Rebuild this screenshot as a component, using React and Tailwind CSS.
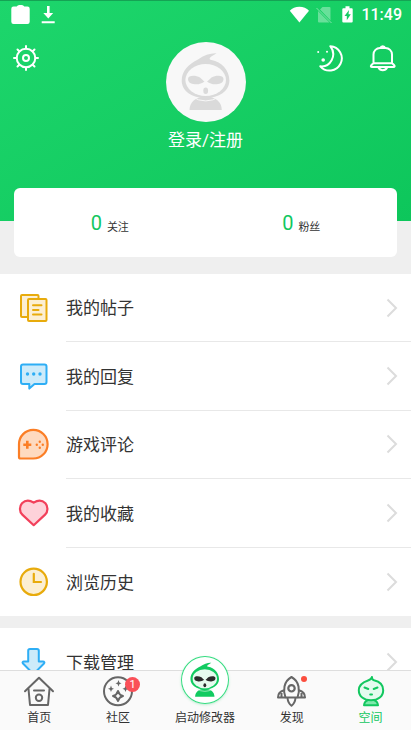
import { clsx } from "clsx"

const MENU = [
  { label: "我的帖子", icon: PostsIcon },
  { label: "我的回复", icon: ReplyIcon },
  { label: "游戏评论", icon: GameIcon },
  { label: "我的收藏", icon: HeartIcon },
  { label: "浏览历史", icon: ClockIcon },
]

const STATS = [
  { label: "关注", count: 0 },
  { label: "粉丝", count: 0 },
]

/* ==================== Menu icons ==================== */
function PostsIcon() {
  return (
    <svg viewBox="0 0 36 36" className="size-9" fill="#fcefd3" stroke="#e8ab0c" strokeWidth="2" strokeLinejoin="round" strokeLinecap="round">
      <rect x="5" y="5" width="17.500" height="22" rx="1" />
      <rect x="12" y="9" width="18.500" height="22" rx="1" />
      <path d="M17 15.300h8.500M17 20h5.500M17 24.500h8.500" />
    </svg>
  )
}

function ReplyIcon() {
  return (
    <svg viewBox="0 0 36 36" className="size-9" fill="#cdebfa" stroke="#2eaef5" strokeWidth="2" strokeLinejoin="round">
      <path d="M7 5.500h21.500a2 2 0 0 1 2 2V23a2 2 0 0 1-2 2H18.500l-5.200 4.600V25H7a2 2 0 0 1-2-2V7.500a2 2 0 0 1 2-2z" />
      <g fill="#2eaef5" stroke="none">
        <circle cx="11.500" cy="15" r="1.700" />
        <circle cx="17.700" cy="15" r="1.700" />
        <circle cx="24" cy="15" r="1.700" />
      </g>
    </svg>
  )
}

function GameIcon() {
  return (
    <svg viewBox="0 0 36 36" className="size-9">
      <path
        d="M4.500 31.500A1.500 1.500 0 0 1 3 30V17.300A14.300 14.300 0 1 1 17.300 31.500z"
        fill="#fedac0"
        stroke="#fb7e26"
        strokeWidth="2.200"
      />
      <path d="M11.300 13.800v8M7.300 17.800h8" stroke="#fb7e26" strokeWidth="2.600" />
      <g fill="#fb7e26">
        <circle cx="23.800" cy="14.800" r="1.200" />
        <circle cx="23.800" cy="20.800" r="1.200" />
        <circle cx="20.800" cy="17.800" r="1.200" />
        <circle cx="26.800" cy="17.800" r="1.200" />
      </g>
    </svg>
  )
}

function HeartIcon() {
  return (
    <svg viewBox="0 0 36 36" className="size-9" fill="#fed2da" stroke="#f2405b" strokeWidth="2.200" strokeLinejoin="round">
      <path d="M17.700 30.200L6.300 19.600C3.300 16.800 3.200 11.500 6 8.300c3-3 7.500-3.400 11.700-.6 4.200-2.800 8.700-2.400 11.700.6 2.800 3.200 2.700 8.500-.3 11.300z" />
    </svg>
  )
}

function ClockIcon() {
  return (
    <svg viewBox="0 0 36 36" className="size-9" fill="#fcefd3" stroke="#e8ab0c" strokeWidth="2.200" strokeLinecap="round">
      <circle cx="17.700" cy="17.800" r="13.200" />
      <path d="M17.800 9.800v8.200h7.200" fill="none" />
    </svg>
  )
}

function DownloadIcon() {
  return (
    <svg viewBox="0 0 36 36" className="size-9" fill="#cdebfa" stroke="#2eaef5" strokeWidth="2" strokeLinejoin="round">
      <path d="M14 5h7a1.800 1.800 0 0 1 1.800 1.800V17.500h4.200c1.300 0 1.800 1 1 2L18.600 29a1.600 1.600 0 0 1-2.200 0L7 19.500c-.9-1-.3-2 1-2h4.200V6.800A1.800 1.800 0 0 1 14 5z" />
    </svg>
  )
}

function Chevron() {
  return (
    <svg viewBox="0 0 12 20" className="w-3 h-5" fill="none" stroke="#dcdcdc" strokeWidth="2">
      <path d="M1.500 1.500L10 10l-8.500 8.500" />
    </svg>
  )
}

/* ==================== Mascot ==================== */
function Mascot({ className, color, face, eyes }) {
  return (
    <svg viewBox="0 0 80 80" className={className}>
      <path
        d="M50.500 11.200C45 10.800 38 13 32 17.500 23 22 15.700 28.500 15.700 38.500 15.700 49 26 56 39.500 56S63.400 49 63.400 38.500C63.400 28 55.500 20 45.500 18c-1.500-.3-2.500-1-1.500-2.200C45.500 14 48 13 50.500 11.200z"
        fill={color}
      />
      <ellipse cx="39.700" cy="38" rx="20.300" ry="16" fill={face} />
      <path d="M23.500 68c0-8 6.500-13.600 16.200-13.600S55.800 60 55.800 68z" fill={color} />
      <path d="M26 54.600a24 24 0 0 0 27.500 0" fill="none" stroke={face} strokeWidth="1" />
      <g fill={eyes}>
        <path d="M22 37c0-4 7.500-4 12-1.500 2 1.500 3 3.300 4.500 4-2.500 2-5.500 3-9.500 2.800C24.500 42 22 40 22 37z" />
        <path d="M57.500 37c0-4-7.500-4-12-1.500-2 1.500-3 3.300-4.500 4 2.500 2 5.500 3 9.500 2.800 4.500-.3 7-2.300 7-5.300z" />
        <ellipse cx="39.700" cy="48.800" rx="2.400" ry="3.200" />
      </g>
    </svg>
  )
}

/* ==================== Tab icons ==================== */
function HomeIcon() {
  return (
    <svg viewBox="0 0 32 32" className="size-8" fill="none" stroke="#666" strokeWidth="2" strokeLinejoin="round" strokeLinecap="round">
      <path d="M2 16.200L16 2.800l14 13.400" />
      <path d="M5.500 14l1.500 16h18l1.500-16M11 15.500h10" />
      <circle cx="16" cy="22.800" r="3.200" />
    </svg>
  )
}

function CommunityIcon() {
  return (
    <svg viewBox="0 0 32 32" className="size-8" fill="none" stroke="#666" strokeWidth="2">
      <circle cx="16" cy="16.300" r="14" />
      <path d="M16 16c.8 3 2 4.200 5 5-3 .8-4.200 2-5 5-.8-3-2-4.200-5-5 3-.8 4.200-2 5-5z" strokeLinejoin="round" />
      <g fill="#666" stroke="none">
        <path d="M16.500 5l.9 2.400 2.100.9-2.100.9-.9 2.400-.9-2.400-2.100-.9 2.100-.9z" />
        <path d="M9 10.500l.9 2.400 2.100.9-2.100.9-.9 2.400-.9-2.400-2.100-.9 2.100-.9z" />
        <path d="M23.500 10.500l.9 2.400 2.100.9-2.100.9-.9 2.400-.9-2.400-2.100-.9 2.100-.9z" />
      </g>
    </svg>
  )
}

function RocketIcon() {
  return (
    <svg viewBox="0 0 32 32" className="size-8" fill="none" stroke="#666" strokeWidth="2" strokeLinejoin="round">
      <path d="M9.500 22.500C7 16 7.300 6.500 15.500 2c8.200 4.500 8.500 14 6 20.500z" />
      <circle cx="15.500" cy="13.300" r="3.200" strokeWidth="2.200" />
      <path d="M8 15.300c-4 1-6 3-6 7.200h7.500M23 15.300c4 1 6 3 6 7.200h-7.500M5.500 22v-4M25.500 22v-4" />
      <path d="M11.500 23c.3 3.500 1.800 6 4 7.800 2.200-1.800 3.700-4.300 4-7.800" />
    </svg>
  )
}

function SpaceIcon() {
  return (
    <svg viewBox="0 0 32 32" className="size-8" fill="#e4fbef" stroke="#12c75f" strokeWidth="2" strokeLinejoin="round" strokeLinecap="round">
      <path d="M9 30.300c.3-2.500 1.500-4.500 4-5.300h6c2.500.8 3.700 2.800 4 5.300z" fill="#7fe8ac" />
      <path d="M17 2c-.3 1.600.2 2.600 2 3.300C24.500 6.500 28.200 10 28.200 15.300c0 6-5 10-12.200 10S3.800 21.300 3.800 15.300C3.800 9.500 8.500 7 13 5.500 15 4.800 16.500 3.800 17 2z" />
      <path d="M9.500 12.500l3.800 1.500M22.500 12.500L18.700 14M15.200 19.500h1.800" />
    </svg>
  )
}

function Tab({ label, active, children }) {
  return (
    <a
      href="#"
      className={clsx(
        "relative flex flex-col items-center pt-1 text-xs leading-[22px]",
        active ? "text-[#12c75f]" : "text-[#333]"
      )}
    >
      <span className="relative size-8">{children}</span>
      <span className="whitespace-nowrap">{label}</span>
    </a>
  )
}

function MenuRow({ label, icon: Icon, last }) {
  return (
    <a href="#" className="flex items-center gap-[14px] pl-4">
      <Icon />
      <span
        className={clsx(
          "flex flex-1 self-stretch items-center justify-between pr-[13px]",
          !last && "border-b border-[#e8e8e8]"
        )}
      >
        <span className="pt-[3px]">{label}</span>
        <Chevron />
      </span>
    </a>
  )
}

function StatusBar() {
  return (
    <div className="flex items-center justify-between h-7 pl-[10px] pr-[9px] border-t border-[#15a354]">
      <div className="flex items-center gap-2">
        <svg viewBox="0 0 20 20" className="size-5" fill="#fff">
          <path d="M3.500 1.500h3.200C7.500.4 9 0 10.500 0s3 .4 3.800 1.500h3.200A2.200 2.200 0 0 1 19.700 3.700v13a2.200 2.200 0 0 1-2.200 2.200h-14a2.200 2.200 0 0 1-2.200-2.200v-13A2.200 2.200 0 0 1 3.500 1.500z" />
        </svg>
        <svg viewBox="0 0 20 20" className="size-5" fill="#fff">
          <path d="M9 1h2.600v7h3.600L10.300 13.500 5.300 8H9zM3.700 16.300h13v1.900h-13z" />
        </svg>
      </div>
      <div className="flex items-center gap-1">
        <svg viewBox="0 0 20 20" className="size-5" fill="#fff">
          <path d="M10.400 17.500L.8 5.700C3.200 3.200 6.500 1.700 10.400 1.700s7.200 1.500 9.600 4z" />
        </svg>
        <svg viewBox="0 0 20 20" className="size-5">
          <path d="M9.500 2H16.500a1 1 0 0 1 1 1v12.500L7 4.500zM5 6l11.500 11.500H6a1 1 0 0 1-1-1z" fill="#fff" opacity=".35" />
          <path d="M3.500 3l15 15" stroke="#fff" opacity=".45" />
        </svg>
        <svg viewBox="0 0 20 20" className="size-5">
          <path d="M8.500 1.300h4v1.900h2.200a1 1 0 0 1 1 1V16.500a1 1 0 0 1-1 1H6.300a1 1 0 0 1-1-1V4.200a1 1 0 0 1 1-1H8.500z" fill="#fff" />
          <path d="M12 5L7.500 11h2.300v4.200l4-6h-2.300z" fill="#14cb63" />
        </svg>
        <span className="font-[Roboto,sans-serif] font-medium text-base">11:49</span>
      </div>
    </div>
  )
}

function Header() {
  return (
    <header className="h-[221px] text-white bg-linear-to-br from-[#1dd66c] to-[#0dc65b]">
      <StatusBar />
      <div className="grid grid-cols-[1fr_auto_1fr] items-start pt-[14px] px-3">
        <button aria-label="设置" className="justify-self-start pt-[2px]">
          <svg viewBox="0 0 28 28" className="size-7" fill="none" stroke="#fff" strokeWidth="2" strokeLinecap="round">
            <circle cx="14" cy="14" r="9.300" />
            <circle cx="14" cy="14" r="3" />
            <path d="M14 4.500V2M14 26v-2.500M4.500 14H2M26 14h-2.500M7.300 7.300L5.500 5.500M22.500 22.500l-1.800-1.800M7.300 20.700l-1.800 1.800M22.500 5.500l-1.800 1.800" />
          </svg>
        </button>
        <button className="flex flex-col items-center gap-[6px] text-[17px] leading-6">
          <span className="size-20 rounded-full bg-[#f8f8f8]">
            <Mascot className="size-20" color="#dadada" face="#f8f8f8" eyes="#dadada" />
          </span>
          登录/注册
        </button>
        <div className="flex justify-self-end gap-6 pt-[2px] pr-[2px]">
          <button aria-label="夜间模式">
            <svg viewBox="0 0 28 28" className="size-7" fill="none" stroke="#fff" strokeWidth="2" strokeLinejoin="round">
              <path d="M13.300 2.200A12.200 12.200 0 1 1 3.300 22.300C13 23.500 20.500 11.500 13.300 2.200z" />
              <g fill="#fff" stroke="none">
                <circle cx="1.200" cy="8" r="1" />
                <circle cx="10" cy="7.800" r="1" />
                <circle cx="6.200" cy="16" r="1.800" />
              </g>
            </svg>
          </button>
          <button aria-label="消息">
            <svg viewBox="0 0 28 28" className="size-7" fill="none" stroke="#fff" strokeWidth="2" strokeLinejoin="round">
              <path d="M4.500 19V10.500a6.500 6.500 0 0 1 6.500-6.500h5.500a6.500 6.500 0 0 1 6.500 6.500V19l2.200 2.200c.8.900.5 1.900-.7 1.900H3c-1.200 0-1.500-1-.7-1.900zM4.500 19.300h18.500" />
              <path d="M11.500 4a2.300 2.300 0 0 1 4.500 0M9.500 23.500c.8 1.700 2.300 2.700 4.300 2.700s3.500-1 4.300-2.700" />
            </svg>
          </button>
        </div>
      </div>
    </header>
  )
}

export default function App() {
  return (
    <div className="flex flex-col h-dvh bg-[#efefef] font-['Roboto','Noto_Sans_CJK_SC',sans-serif] text-[#333]">
      <main className="flex-1 min-h-0 overflow-y-auto [scrollbar-width:none]">
        <Header />

        {/* ==================== Stats card ==================== */}
        <section className="relative grid grid-cols-2 h-[69px] -mt-[33px] mx-[14px] mb-[17px] bg-white rounded-md">
          {STATS.map((stat) => (
            <a key={stat.label} href="#" className="flex items-center justify-center gap-[5px]">
              <span className="text-xl text-[#12c75f]">{stat.count}</span>
              <span className="mt-3 text-[11px]">{stat.label}</span>
            </a>
          ))}
        </section>

        {/* ==================== Menu ==================== */}
        <section className="grid grid-rows-5 h-[342px] mb-3 bg-white text-[17px]">
          {MENU.map((item, i) => (
            <MenuRow key={item.label} {...item} last={i === MENU.length - 1} />
          ))}
        </section>
        <section className="grid h-[68px] bg-white text-[17px]">
          <MenuRow label="下载管理" icon={DownloadIcon} last />
        </section>
      </main>

      {/* ==================== Tab bar ==================== */}
      <nav className="relative grid grid-cols-[1fr_1fr_95px_1fr_1fr] h-[60px] pr-[1px] bg-[#fafafa] border-t border-[#dedede]">
        <Tab label="首页">
          <HomeIcon />
        </Tab>
        <Tab label="社区">
          <CommunityIcon />
          <span className="absolute top-[2px] left-[23px] size-[15px] rounded-full bg-[#fa5058] text-white text-[11px] leading-[15px] text-center">
            1
          </span>
        </Tab>
        <Tab label="启动修改器">
          <span className="absolute bottom-[3px] -left-2 size-12 rounded-full bg-white ring-1 ring-inset ring-[#35dc80] shadow-sm shadow-[#12c75f]/20">
            <Mascot className="size-12" color="#12cb61" face="#e6fbef" eyes="#2b2b2b" />
          </span>
        </Tab>
        <Tab label="发现">
          <RocketIcon />
          <span className="absolute top-[1px] left-[25px] size-[6px] rounded-full bg-[#fb4d3d]" />
        </Tab>
        <Tab label="空间" active>
          <SpaceIcon />
        </Tab>
      </nav>
    </div>
  )
}
